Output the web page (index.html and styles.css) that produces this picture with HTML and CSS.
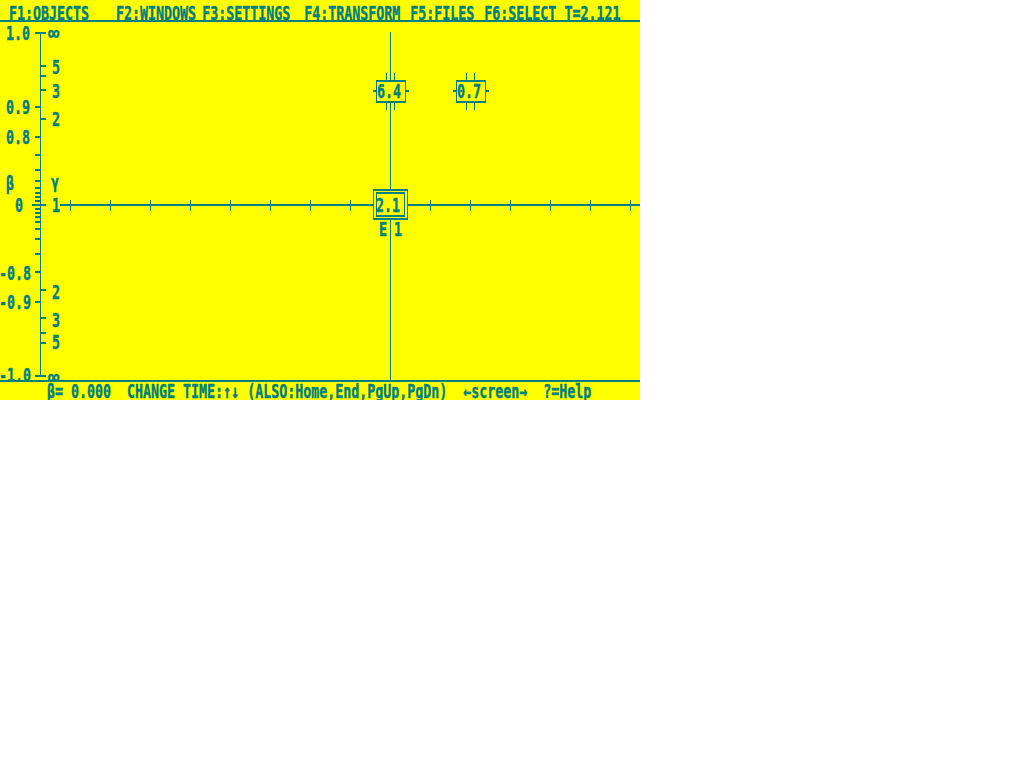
FILE: index.html
```html
<!DOCTYPE html>
<html lang="en">
<head>
  <meta charset="UTF-8" />
  <title>Relativity Lab</title>
  <link rel="stylesheet" href="styles.css">
</head>
<body>

  <div class="screen">

    <div class="menu">
      <span class="item">F1:OBJECTS</span>
      <span class="item">F2:WINDOWS</span>
      <span class="item">F3:SETTINGS</span>
      <span class="item">F4:TRANSFORM</span>
      <span class="item">F5:FILES</span>
      <span class="item">F6:SELECT</span>
      <span class="item">T=2.121</span>
    </div>

    <svg class="plot" width="640" height="358" viewBox="0 22 640 358">
      <g class="ink">
        <!-- velocity axis (beta) -->
        <rect x="40" y="33" width="1" height="343"/>
        <rect x="35" y="32" width="11" height="2"/>
        <rect x="35" y="375" width="11" height="2"/>
        <rect x="32" y="204" width="14" height="2"/>

        <!-- beta ticks, left side -->
        <rect x="35" y="106" width="5" height="2"/>
        <rect x="35" y="136" width="5" height="2"/>
        <rect x="35" y="154" width="5" height="2"/>
        <rect x="35" y="169" width="5" height="2"/>
        <rect x="35" y="180" width="5" height="2"/>
        <rect x="35" y="187" width="5" height="2"/>
        <rect x="35" y="192" width="5" height="2"/>
        <rect x="35" y="196" width="5" height="2"/>
        <rect x="35" y="200" width="5" height="2"/>
        <rect x="35" y="208" width="5" height="2"/>
        <rect x="35" y="212" width="5" height="2"/>
        <rect x="35" y="216" width="5" height="2"/>
        <rect x="35" y="221" width="5" height="2"/>
        <rect x="35" y="228" width="5" height="2"/>
        <rect x="35" y="238" width="5" height="2"/>
        <rect x="35" y="253" width="5" height="2"/>
        <rect x="35" y="271" width="5" height="2"/>
        <rect x="35" y="301" width="5" height="2"/>

        <!-- gamma ticks, right side -->
        <rect x="41" y="65" width="5" height="2"/>
        <rect x="41" y="75" width="5" height="2"/>
        <rect x="41" y="89" width="5" height="2"/>
        <rect x="41" y="118" width="5" height="2"/>
        <rect x="41" y="289" width="5" height="2"/>
        <rect x="41" y="317" width="5" height="2"/>
        <rect x="41" y="332" width="5" height="2"/>
        <rect x="41" y="342" width="5" height="2"/>

        <!-- space axis -->
        <rect x="60" y="204" width="580" height="2"/>
        <rect x="70" y="200" width="1" height="11"/>
        <rect x="110" y="200" width="1" height="11"/>
        <rect x="150" y="200" width="1" height="11"/>
        <rect x="190" y="200" width="1" height="11"/>
        <rect x="230" y="200" width="1" height="11"/>
        <rect x="270" y="200" width="1" height="11"/>
        <rect x="310" y="200" width="1" height="11"/>
        <rect x="350" y="200" width="1" height="11"/>
        <rect x="430" y="200" width="1" height="11"/>
        <rect x="470" y="200" width="1" height="11"/>
        <rect x="510" y="200" width="1" height="11"/>
        <rect x="550" y="200" width="1" height="11"/>
        <rect x="590" y="200" width="1" height="11"/>
        <rect x="630" y="200" width="1" height="11"/>

        <!-- time axis -->
        <rect x="390" y="32" width="1" height="348"/>
      </g>

      <defs>
        <g id="clock">
          <rect class="paper" x="0" y="0" width="30" height="23"/>
          <rect x="0" y="0" width="30" height="2"/>
          <rect x="0" y="21" width="30" height="2"/>
          <rect x="0" y="0" width="1" height="23"/>
          <rect x="29" y="0" width="1" height="23"/>
          <rect x="-3" y="10" width="3" height="2"/>
          <rect x="30" y="10" width="3" height="2"/>
          <rect x="10" y="-7" width="1" height="7"/>
          <rect x="18" y="-7" width="1" height="7"/>
          <rect x="10" y="23" width="1" height="7"/>
          <rect x="18" y="23" width="1" height="7"/>
        </g>
      </defs>

      <!-- objects -->
      <g class="ink">
        <use href="#clock" x="376" y="80"/>
        <use href="#clock" x="456" y="80"/>

        <rect class="paper" x="373" y="189" width="35" height="31"/>
        <rect x="373" y="189" width="35" height="2"/>
        <rect x="373" y="218" width="35" height="2"/>
        <rect x="373" y="189" width="1" height="31"/>
        <rect x="407" y="189" width="1" height="31"/>
        <rect x="376" y="192" width="29" height="2"/>
        <rect x="376" y="215" width="29" height="2"/>
        <rect x="376" y="192" width="1" height="25"/>
        <rect x="404" y="192" width="1" height="25"/>
      </g>

      <!-- labels -->
      <text class="lbl" transform="translate(6 40) scale(1 1.45)">1.0</text>
      <text class="lbl" transform="translate(6 114) scale(1 1.45)">0.9</text>
      <text class="lbl" transform="translate(6 144) scale(1 1.45)">0.8</text>
      <text class="lbl" transform="translate(6 190) scale(1 1.45)">β</text>
      <text class="lbl" transform="translate(15 212) scale(1 1.45)">0</text>
      <text class="lbl" transform="translate(-1 280) scale(1 1.45)">-0.8</text>
      <text class="lbl" transform="translate(-1 309) scale(1 1.45)">-0.9</text>
      <text class="lbl" transform="translate(-1 382) scale(1 1.45)">-1.0</text>

      <text class="lbl" transform="translate(48 40) scale(1.4 1.5)">∞</text>
      <text class="lbl" transform="translate(52 74) scale(1 1.45)">5</text>
      <text class="lbl" transform="translate(52 98) scale(1 1.45)">3</text>
      <text class="lbl" transform="translate(52 126) scale(1 1.45)">2</text>
      <text class="lbl" transform="translate(51 188) scale(1 1.3)">γ</text>
      <text class="lbl" transform="translate(52 212) scale(1 1.45)">1</text>
      <text class="lbl" transform="translate(52 299) scale(1 1.45)">2</text>
      <text class="lbl" transform="translate(52 327) scale(1 1.45)">3</text>
      <text class="lbl" transform="translate(52 349) scale(1 1.45)">5</text>
      <text class="lbl" transform="translate(48 384) scale(1.4 1.5)">∞</text>

      <text class="lbl" transform="translate(377 98) scale(1 1.45)">6.4</text>
      <text class="lbl" transform="translate(457 98) scale(1 1.45)">0.7</text>
      <text class="lbl" transform="translate(376 212) scale(1 1.45)">2.1</text>
      <text class="lbl" transform="translate(379 236) scale(1 1.45)">E</text>
      <text class="lbl" transform="translate(394 236) scale(1 1.45)">1</text>
    </svg>

    <div class="status">
      <span class="line">β= 0.000  CHANGE TIME:↑↓ (ALSO:Home,End,PgUp,PgDn)  ←screen→  ?=Help</span>
    </div>

  </div>

</body>
</html>
```

FILE: styles.css
```css
body {
  margin: 0;
  background-color: #fff;
}
.screen {
  width: 640px;
  height: 400px;
  background-color: #ffff00; /* CGA yellow */
  color: #008080;
  font: bold 13.3px "DejaVu Sans Mono", monospace;
  -webkit-text-stroke: 0.3px #008080;
  overflow: hidden;
}
.menu {
  display: flex;
  align-items: flex-start;
  height: 22px;
  box-sizing: border-box;
  padding: 9px 0 0 9px;
  border-bottom: 2px solid #008080;
}
.menu .item,
.status .line {
  display: block;
  line-height: 13px;
  white-space: pre;
  transform: scaleY(1.45);
  transform-origin: 0 11px;
}
.menu .item:nth-child(2) { margin-left: 27px; }
.menu .item:nth-child(3) { margin-left: 6px; }
.menu .item:nth-child(4) { margin-left: 14px; }
.menu .item:nth-child(5) { margin-left: 10px; }
.menu .item:nth-child(6) { margin-left: 10px; }
.menu .item:nth-child(7) { margin-left: 8px; }

.plot {
  display: block;
}
.ink {
  fill: #008080;
}
.paper {
  fill: #ffff00;
}
.lbl {
  font: bold 13.3px "DejaVu Sans Mono", monospace;
  fill: #008080;
  stroke: #008080;
  stroke-width: 0.3px;
}
.status {
  height: 20px;
  box-sizing: border-box;
  padding: 5px 0 0 47px;
  border-top: 2px solid #008080;
}
```
